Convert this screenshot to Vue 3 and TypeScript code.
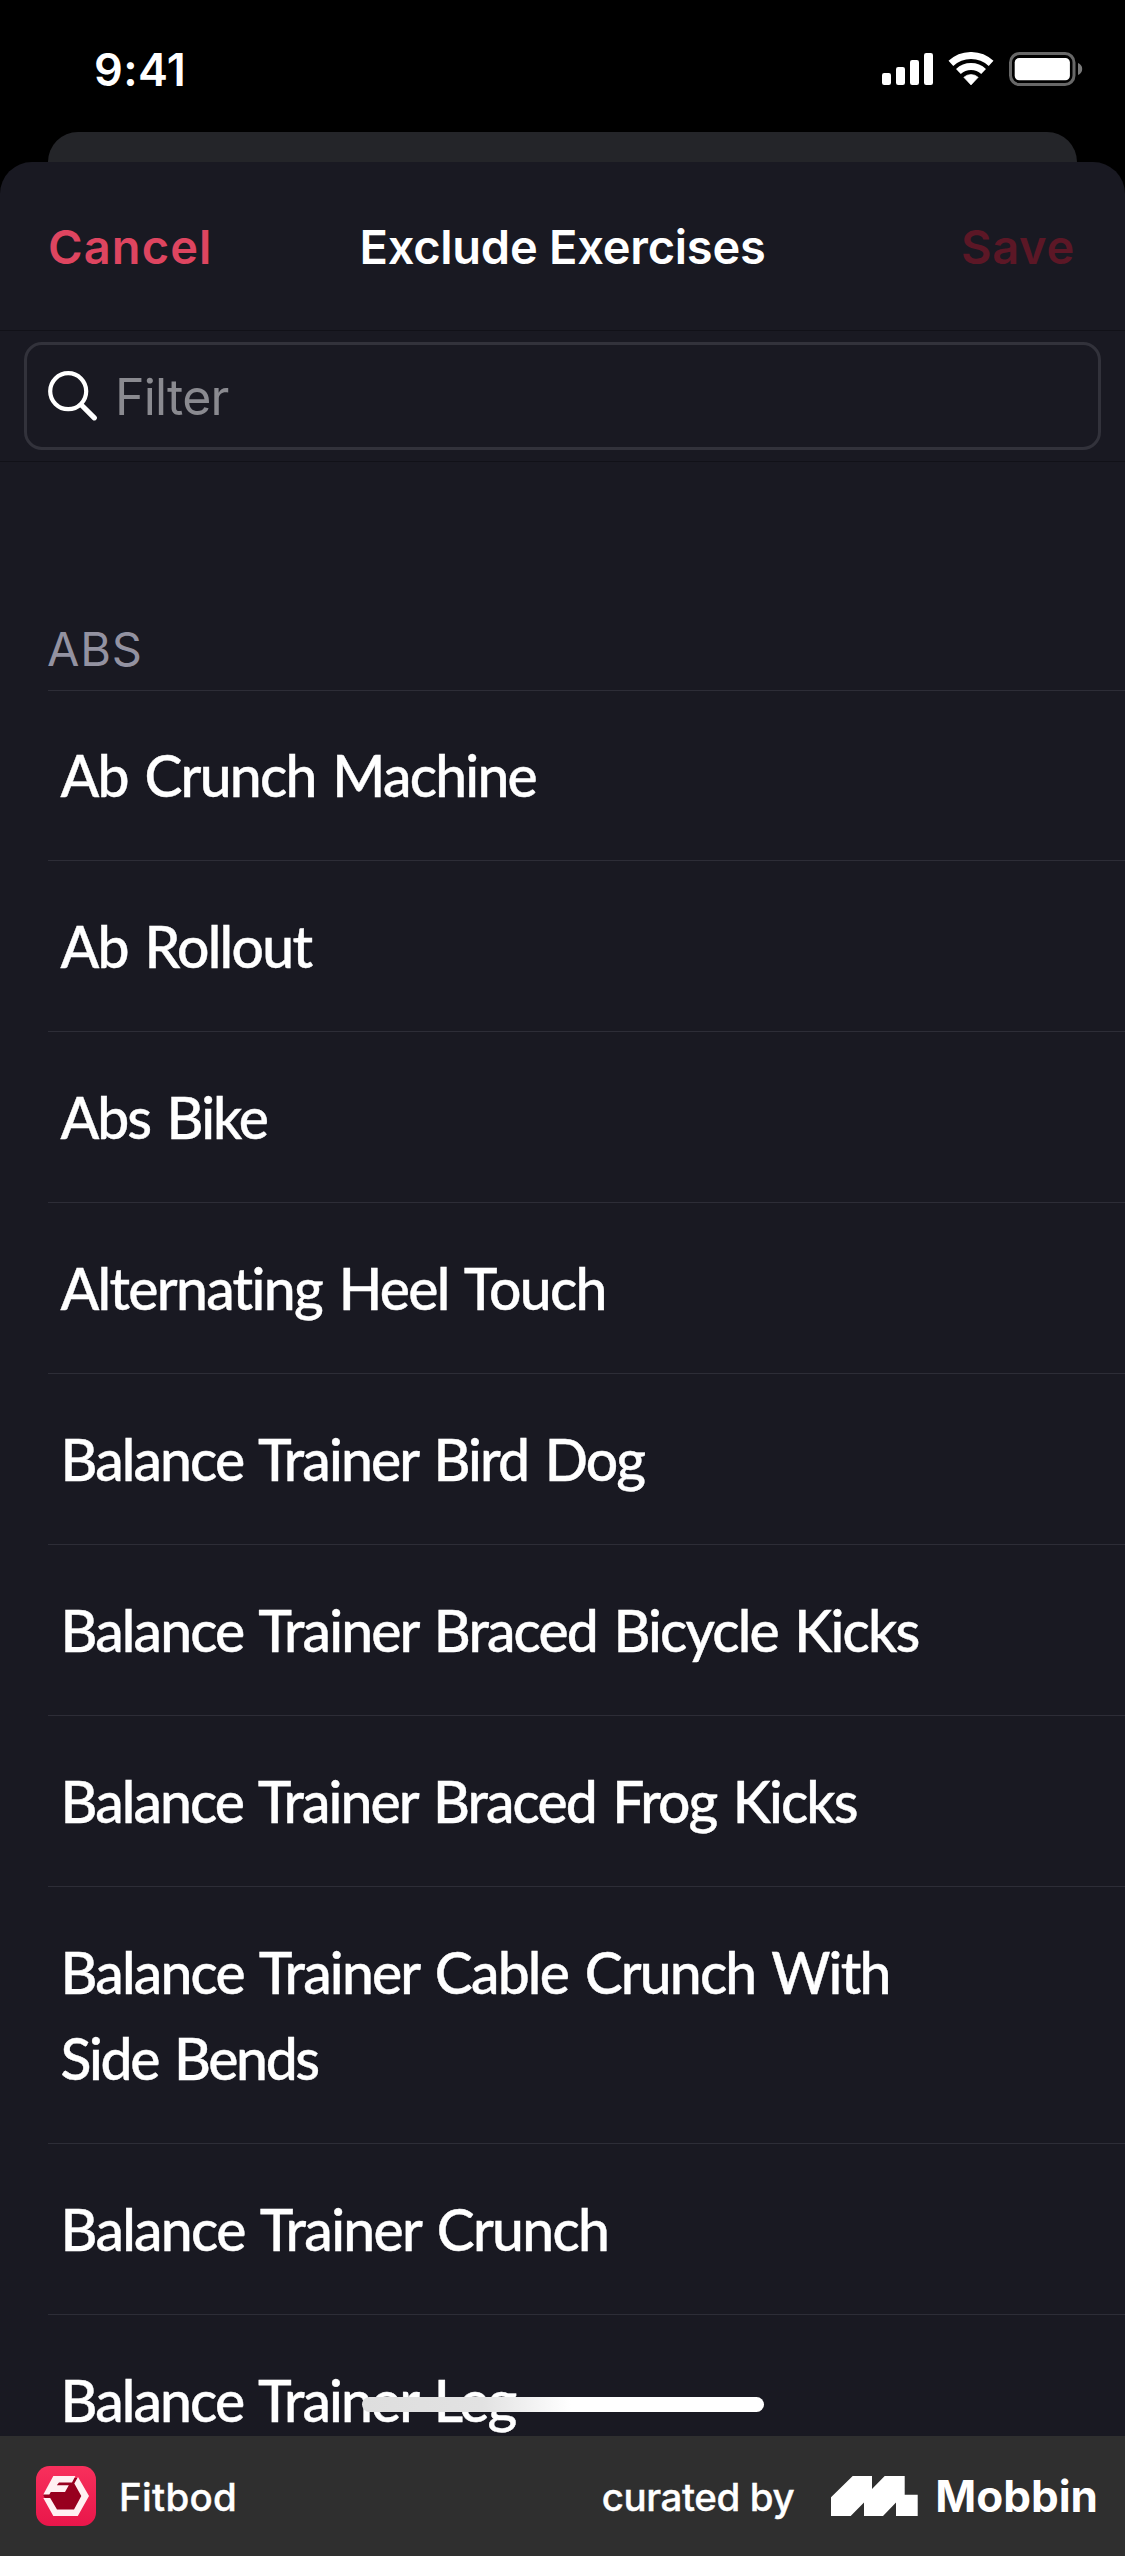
<script setup lang="ts">
interface Line {
  text: string
  tracking: number
}

interface Exercise {
  id: number
  lines: Line[]
}

const exercises: Exercise[] = [
  { id: 1, lines: [{ text: 'Ab Crunch Machine', tracking: -1.74 }] },
  { id: 2, lines: [{ text: 'Ab Rollout', tracking: -1.7 }] },
  { id: 3, lines: [{ text: 'Abs Bike', tracking: -1.95 }] },
  { id: 4, lines: [{ text: 'Alternating Heel Touch', tracking: -1.68 }] },
  { id: 5, lines: [{ text: 'Balance Trainer Bird Dog', tracking: -1.89 }] },
  { id: 6, lines: [{ text: 'Balance Trainer Braced Bicycle Kicks', tracking: -1.87 }] },
  { id: 7, lines: [{ text: 'Balance Trainer Braced Frog Kicks', tracking: -1.92 }] },
  {
    id: 8,
    lines: [
      { text: 'Balance Trainer Cable Crunch With', tracking: -1.81 },
      { text: 'Side Bends', tracking: -2.35 },
    ],
  },
  { id: 9, lines: [{ text: 'Balance Trainer Crunch', tracking: -1.69 }] },
  { id: 10, lines: [{ text: 'Balance Trainer Leg', tracking: -1.88 }] },
]
</script>

<template>
  <div class="screen">
    <header class="status">
      <span class="time">9:41</span>
      <svg class="indicators" width="201" height="34" viewBox="0 0 201 34">
        <g fill="#fff">
          <rect x="0" y="21" width="9" height="12" rx="2.2" />
          <rect x="14" y="15" width="9" height="18" rx="2.2" />
          <rect x="28" y="8" width="9" height="25" rx="2.2" />
          <rect x="42" y="1" width="9" height="32" rx="2.2" />
          <path d="M89 33 81.8 25.3A10.5 10.5 0 0 1 96.2 25.3Z" stroke="#fff" stroke-width=".6" stroke-linejoin="round" />
          <rect x="132.7" y="6" width="55.2" height="22.2" rx="4.5" />
        </g>
        <g fill="none" stroke="#fff" stroke-width="7">
          <path d="M68.9 11.4A29.5 29.5 0 0 1 109.1 11.4" />
          <path d="M76.4 19.5A18.5 18.5 0 0 1 101.6 19.5" />
        </g>
        <rect x="128.5" y="1.5" width="63.5" height="31" rx="9" fill="none" stroke="#686868" stroke-width="3" />
        <path d="M196 11q4.2 1.8 4.2 6t-4.2 6z" fill="#7a7a7a" />
      </svg>
    </header>

    <div class="backdrop-card"></div>

    <main class="sheet">
      <nav class="nav">
        <span class="cancel">Cancel</span>
        <h1 class="title">Exclude Exercises</h1>
        <span class="save">Save</span>
      </nav>

      <div class="search">
        <div class="field">
          <svg width="50" height="50" viewBox="0 0 50 50" fill="none" stroke="#fff" stroke-linecap="round">
            <circle cx="20.2" cy="20.2" r="18" stroke-width="4.2" />
            <path d="M33.4 34 46.3 46.8" stroke-width="5.2" />
          </svg>
          <span class="placeholder">Filter</span>
        </div>
      </div>

      <h2 class="section">ABS</h2>
      <ul class="list">
        <li v-for="exercise in exercises" :key="exercise.id" class="row">
          <span
            v-for="line in exercise.lines"
            :key="line.text"
            class="line"
            :style="{ letterSpacing: line.tracking + 'px' }"
          >{{ line.text }}</span>
        </li>
      </ul>
      <div class="home-indicator"></div>
    </main>

    <footer class="footer">
      <svg class="app-icon" width="60" height="60" viewBox="0 0 60 60">
        <defs>
          <linearGradient id="tile" x1="0" y1="0" x2="0" y2="1">
            <stop offset="0" stop-color="#f8305c" />
            <stop offset="1" stop-color="#e9164a" />
          </linearGradient>
        </defs>
        <rect width="60" height="60" rx="13.5" fill="url(#tile)" />
        <path d="M7.3 29 17 12H41.5L51 30 41 47H18L8.5 31.5Z" fill="#98001f" />
        <path
          d="M7.3 28.4 17.3 10H39.4L36 16.6H23L20.8 19.2H32.8L29 26H14.8L13.3 28.4Z"
          fill="#fff0f2"
        />
        <path
          d="M42 11 53 30 41.8 50H17.3L7.3 32H14.2L21 43.4H38L45.3 30 38.3 17.6Z"
          fill="#fff0f2"
        />
      </svg>
      <span class="app-name">Fitbod</span>
      <span class="curated">curated by</span>
      <svg class="mobbin-mark" width="87" height="40" viewBox="0 0 87 40">
        <path
          d="M0 21.3 21.7 0H41V13L53.7 0H73.7V18.7H86.7V40H65V26.5L52 40H33V26.5L19.7 40H0Z"
          fill="#fff"
        />
      </svg>
      <span class="mobbin">Mobbin</span>
    </footer>
  </div>
</template>

<style>
body {
  margin: 0;
  background: #000;
}
</style>

<style scoped>
.screen {
  display: flex;
  flex-direction: column;
  width: 1125px;
  height: 2556px;
  overflow: hidden;
  background: #000;
  color: #fff;
  font-family: Inter, "Liberation Sans", sans-serif;
}

.status {
  box-sizing: border-box;
  display: flex;
  flex: none;
  align-items: center;
  justify-content: space-between;
  height: 132px;
  padding: 6px 42px 0 94px;
}

.time {
  font-size: 45px;
  font-weight: 600;
  letter-spacing: 0.4px;
}

.backdrop-card {
  flex: none;
  height: 30px;
  margin: 0 48px;
  border-radius: 30px 30px 0 0;
  background: #242529;
}

.sheet {
  position: relative;
  flex: none;
  height: 2274px;
  overflow: hidden;
  border-radius: 32px 32px 0 0;
  background: #191922;
}

.nav {
  box-sizing: border-box;
  display: grid;
  grid-template-columns: 1fr auto 1fr;
  align-items: center;
  height: 169px;
  padding: 0 50px 0 48px;
  border-bottom: 1px solid #111118;
  font-size: 47px;
  font-weight: 600;
}

.cancel {
  color: #de4560;
  letter-spacing: 1.1px;
}

.title {
  margin: 0 -1px 0 1px;
  font-size: inherit;
  font-weight: inherit;
  letter-spacing: -0.25px;
}

.save {
  justify-self: end;
  color: #5c1726;
  letter-spacing: 0.7px;
}

.search {
  padding: 11px 24px;
  border-bottom: 1px solid #111118;
}

.field {
  box-sizing: border-box;
  display: flex;
  align-items: center;
  gap: 17px;
  height: 108px;
  padding-left: 21px;
  border: 3px solid #32323b;
  border-radius: 18px;
}

.placeholder {
  padding-top: 2px;
  color: #8a8a90;
  font-size: 50px;
  line-height: 60px;
  letter-spacing: -0.8px;
}

.section {
  box-sizing: border-box;
  height: 229px;
  margin: 0 0 0 48px;
  padding: 157px 0 0 0;
  border-bottom: 1px solid #2d2d37;
  color: #9392a1;
  font-size: 47px;
  font-weight: 400;
  line-height: 60px;
  letter-spacing: 0.8px;
  text-indent: -1px;
}

.list {
  margin: 0 0 0 48px;
  padding: 0;
  list-style: none;
}

.row {
  display: flex;
  flex-direction: column;
  padding: 42px 0 42px 12.5px;
  border-bottom: 1px solid #2d2d37;
}

.row:first-child {
  padding-top: 41px;
}

.line {
  font-family: Lato, "Liberation Sans", sans-serif;
  font-size: 57px;
  font-weight: 500;
  line-height: 86px;
  word-spacing: 4px;
  white-space: nowrap;
  -webkit-text-stroke: 0.4px #fff;
}

.home-indicator {
  position: absolute;
  bottom: 24px;
  left: 362px;
  width: 402px;
  height: 15px;
  border-radius: 8px;
  background: linear-gradient(90deg, #dedede 0%, #e2e2e2 30%, #fff 52%);
}

.footer {
  display: flex;
  flex: none;
  align-items: center;
  height: 120px;
  padding: 0 27px 0 36px;
  background: #2f2f2f;
}

.app-name,
.curated {
  padding-top: 2px;
  font-size: 38.5px;
  font-weight: 500;
  -webkit-text-stroke: 0.4px #fff;
}

.app-name {
  margin-left: 23px;
  letter-spacing: 0.3px;
}

.curated {
  margin-left: auto;
  letter-spacing: -0.4px;
}

.mobbin-mark {
  margin-left: 37px;
}

.mobbin {
  margin-left: 17px;
  font-size: 44px;
  font-weight: 700;
  letter-spacing: 0;
}
</style>
